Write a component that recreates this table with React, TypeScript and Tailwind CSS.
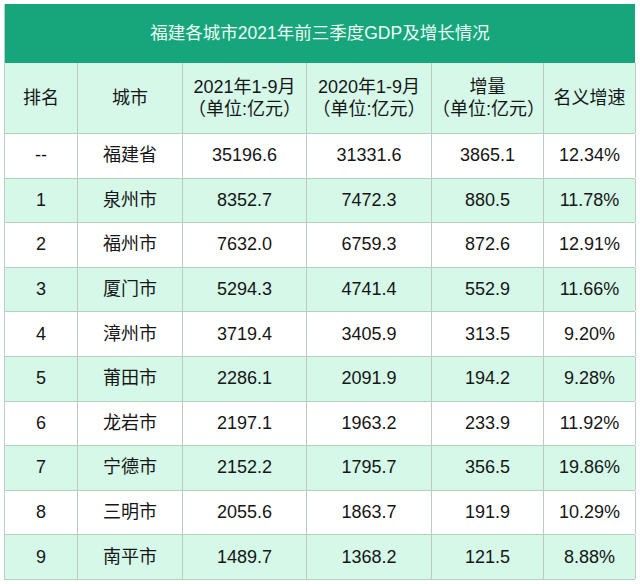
import React from "react";

const rows = [
  ["--", "福建省", "35196.6", "31331.6", "3865.1", "12.34%"],
  ["1", "泉州市", "8352.7", "7472.3", "880.5", "11.78%"],
  ["2", "福州市", "7632.0", "6759.3", "872.6", "12.91%"],
  ["3", "厦门市", "5294.3", "4741.4", "552.9", "11.66%"],
  ["4", "漳州市", "3719.4", "3405.9", "313.5", "9.20%"],
  ["5", "莆田市", "2286.1", "2091.9", "194.2", "9.28%"],
  ["6", "龙岩市", "2197.1", "1963.2", "233.9", "11.92%"],
  ["7", "宁德市", "2152.2", "1795.7", "356.5", "19.86%"],
  ["8", "三明市", "2055.6", "1863.7", "191.9", "10.29%"],
  ["9", "南平市", "1489.7", "1368.2", "121.5", "8.88%"],
];

const font = {
  fontFamily:
    '"Liberation Sans", "Noto Sans CJK SC", "Noto Sans", sans-serif',
};

export default function App() {
  return (
    <div className="w-[640px] h-[584px] bg-white pt-[4px] pl-[4px]" style={font}>
      <div className="w-[631px] border-l border-[#b9cfc3] text-[#161616]">
        <div className="h-[59px] bg-[#17a67b] flex items-center justify-center text-[17.5px] text-[#eefdf6]">
          福建各城市2021年前三季度GDP及增长情况
        </div>
        <div className="grid grid-cols-[73px_105px_124px_125px_112px_92px] h-[71px] bg-[#d5f8e9] border-b border-[#b5cfc2] text-[18px] leading-[22px]">
          <div className="flex items-center justify-center border-r border-[#bfc9c4]">排名</div>
          <div className="flex items-center justify-center border-r border-[#bfc9c4]">城市</div>
          <div className="flex flex-col items-center justify-center border-r border-[#bfc9c4]">
            <span>2021年1-9月</span>
            <span>（单位:亿元）</span>
          </div>
          <div className="flex flex-col items-center justify-center border-r border-[#bfc9c4]">
            <span>2020年1-9月</span>
            <span>（单位:亿元）</span>
          </div>
          <div className="flex flex-col items-center justify-center border-r border-[#bfc9c4]">
            <span>增量</span>
            <span>（单位:亿元）</span>
          </div>
          <div className="flex items-center justify-center border-r border-[#bfc9c4]">名义增速</div>
        </div>
        {rows.map((r, i) => (
          <div
            key={i}
            className={
              "grid grid-cols-[73px_105px_124px_125px_112px_92px] h-[44.6px] border-b border-[#b5cfc2] text-[18px] " +
              (i % 2 === 0 ? "bg-white" : "bg-[#d5f8e9]")
            }
          >
            {r.map((c, j) => (
              <div
                key={j}
                className="flex items-center justify-center border-r border-[#bfc9c4]"
              >
                {c}
              </div>
            ))}
          </div>
        ))}
      </div>
    </div>
  );
}
